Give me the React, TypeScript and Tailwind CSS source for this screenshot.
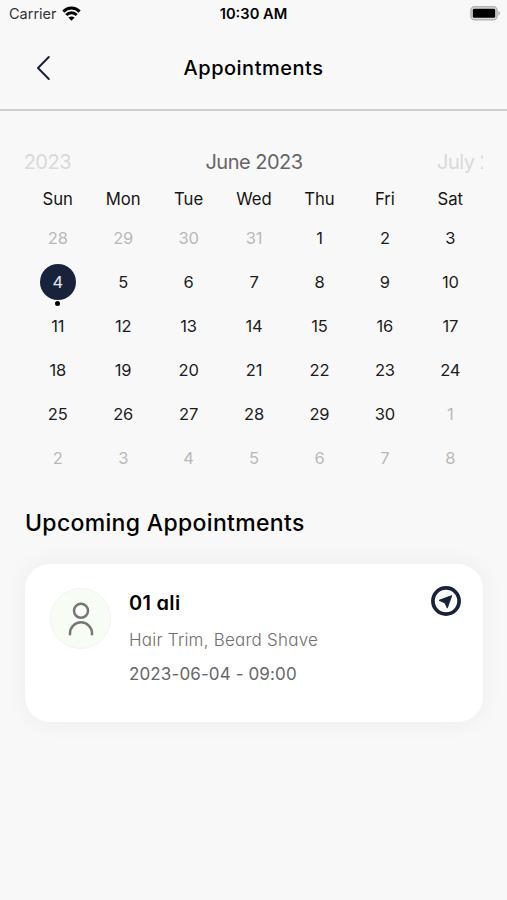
import React, { useState } from 'react';

const WEEKDAYS = ['Sun', 'Mon', 'Tue', 'Wed', 'Thu', 'Fri', 'Sat'];

// June 2023, with the days of May and July that fill the grid
const DAYS = [
  ...[28, 29, 30, 31].map(day => ({ day, current: false })),
  ...Array.from({ length: 30 }, (_, i) => ({ day: i + 1, current: true })),
  ...Array.from({ length: 8 }, (_, i) => ({ day: i + 1, current: false })),
];

const APPOINTMENTS = [
  { id: 1, name: '01 ali', services: 'Hair Trim, Beard Shave', time: '2023-06-04 - 09:00', day: 4 },
];

const StatusBar = () => (
  <div className="grid h-7 grid-cols-3 items-center pl-[9px] pr-[6px]">
    <div className="flex items-center gap-[6px] text-[14.5px] text-[#333]">
      <span>Carrier</span>
      <svg width="19" height="15" viewBox="0 0 19 15" fill="none" stroke="#000" strokeWidth="3" className="-ml-px -mt-[2px]">
        <path d="M1.4 5.6C6 .9 13 .9 17.6 5.6" />
        <path d="M4.3 9c2.9-2.9 7.5-2.9 10.4 0" />
        <path d="M9.5 14.8 6.4 11.6c1.7-1.6 4.5-1.6 6.2 0Z" fill="#000" stroke="none" />
      </svg>
    </div>
    <div className="-ml-[3px] text-center text-[14.7px] font-semibold text-black">10:30 AM</div>
    <svg width="31" height="15" viewBox="0 0 31 15" className="-mt-[2px] justify-self-end">
      <rect x="1" y=".8" width="26" height="13" rx="3.6" fill="#ddd" stroke="#b5b5b5" strokeWidth="1.6" />
      <rect x="2.8" y="2.8" width="22.4" height="9" rx="1.4" fill="#000" />
      <path d="M28.4 5v4.6c2.3-.7 2.3-3.9 0-4.6Z" fill="#b2b2b2" />
    </svg>
  </div>
);

const UserIcon = () => (
  <svg width="28" height="36" viewBox="0 0 28 36" fill="none" stroke="#737873" strokeWidth="2.5" strokeLinecap="round">
    <circle cx="14" cy="9.8" r="7" />
    <path d="M3 33.3v-1a11 11 0 0 1 22 0v1" />
  </svg>
);

const DirectionIcon = () => (
  <svg width="30" height="30" viewBox="0 0 30 30">
    <circle cx="15" cy="15" r="13.1" fill="none" stroke="#18233b" strokeWidth="3.7" />
    <path d="M20.8 9.6 8 14.3l5.9 2.6 2.4 5.2Z" fill="#18233b" stroke="#18233b" strokeWidth=".9" strokeLinejoin="round" />
  </svg>
);

export default function App() {
  const [selected, setSelected] = useState(4);

  return (
    <div className="min-h-[900px] w-full overflow-hidden bg-[#f8f8f8] font-['Inter',sans-serif] text-black">
      <StatusBar />

      <header className="grid h-[83px] grid-cols-[1fr_auto_1fr] items-center border-b-2 border-[#cecece] pb-[2px]">
        <button className="ml-[35px] w-fit">
          <svg width="16" height="26" viewBox="0 0 16 26" fill="none" stroke="#18233b" strokeWidth="2" strokeLinecap="round" strokeLinejoin="round">
            <path d="M13.8 2 3 13l10.8 11" />
          </svg>
        </button>
        <h1 className="text-[20px] font-medium tracking-[0.5px] [font-feature-settings:'cv11']">Appointments</h1>
      </header>

      <main className="pr-[24px] pl-[25px]">
        {/* month switcher */}
        <div className="mt-[36px] flex h-[30px] items-center justify-between overflow-hidden text-[20px] tracking-[-0.5px] text-[#d9d9d9]">
          <div className="flex w-[46px] justify-end overflow-hidden whitespace-nowrap">May 2023</div>
          <div className="text-[#666]">June 2023</div>
          <div className="w-[46px] overflow-hidden whitespace-nowrap">July 2023</div>
        </div>

        <div className="mt-[10px] grid h-[20px] grid-cols-7 items-center text-center text-[16.7px] text-[#151515]">
          {WEEKDAYS.map(name => <div key={name}>{name}</div>)}
        </div>

        <div className="mt-[9px] grid auto-rows-[44px] grid-cols-7 text-[16.5px] tracking-[-0.2px]">
          {DAYS.map(({ day, current }, i) => {
            const active = current && day === selected;
            return (
              <button
                key={i}
                onClick={() => current && setSelected(day)}
                className={`relative flex items-center justify-center ${current ? 'text-[#1c1c1c]' : 'text-[#b8b8b8]'}`}
              >
                <span className={active ? 'flex size-9 items-center justify-center rounded-full bg-[#18233b] text-[#e4e8f0]' : ''}>{day}</span>
                {current && APPOINTMENTS.some(a => a.day === day) && (
                  <span className="absolute -bottom-[2px] size-[5px] rounded-full bg-black" />
                )}
              </button>
            );
          })}
        </div>

        <h2 className="mt-[27px] text-[23px] leading-[32px] font-medium tracking-[0.33px] [font-feature-settings:'cv11']">Upcoming Appointments</h2>

        <div className="mt-[25px]">
          {APPOINTMENTS.map(item => (
            <div key={item.id} className="flex h-[158px] rounded-[25px] bg-white pt-[24px] pr-[22px] pl-[25px] shadow-[0_0_25px_rgba(0,0,0,0.05)] [font-feature-settings:'cv11']">
              <div className="flex size-[61px] shrink-0 items-center justify-center rounded-full border border-[#f0f4ee] bg-[#f7fdf5]">
                <UserIcon />
              </div>
              <div className="ml-[18px] flex-1">
                <div className="text-[20px] leading-[30px] font-semibold tracking-[0.3px]">{item.name}</div>
                <div className="mt-[9px] text-[17px] leading-[26px] font-light tracking-[0.23px] text-[#707070]">{item.services}</div>
                <div className="mt-[8px] text-[17px] leading-[26px] tracking-[0.12px] text-[#686868]">{item.time}</div>
              </div>
              <button className="-mt-[2px] h-fit">
                <DirectionIcon />
              </button>
            </div>
          ))}
        </div>
      </main>
    </div>
  );
}
